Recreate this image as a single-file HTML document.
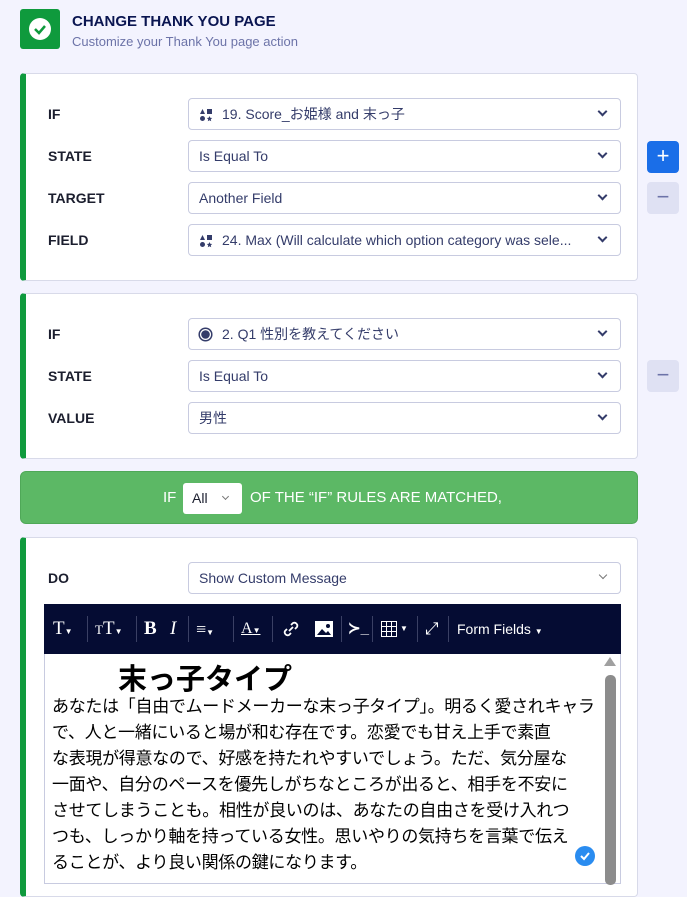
<!DOCTYPE html>
<html><head><meta charset="utf-8"><style>
*{box-sizing:border-box;margin:0;padding:0}
body{width:687px;height:874px;overflow:hidden;background:#f3f3fe;font-family:"Liberation Sans","Noto Sans CJK JP",sans-serif;position:relative;color:#0a1551}
.abs{position:absolute}
.card{position:absolute;left:20px;width:618px;background:#fff;border:1px solid #d8dae9;border-left:6px solid #0f9a3d;border-radius:4px}
.lbl{position:absolute;left:48px;font-size:14px;font-weight:bold;color:#1b1e2e}
.sel{position:absolute;left:188px;width:433px;height:32px;border:1px solid #c8cbe0;border-radius:4px;background:#fff;font-size:14px;color:#343c6a;padding-left:10px;line-height:30px}
.sel .chev{position:absolute;right:14px;top:9px;width:7px;height:7px;border-right:2px solid #343c6a;border-bottom:2px solid #343c6a;transform:rotate(45deg)}
.btn{position:absolute;left:647px;width:32px;height:32px;border-radius:4px;color:#fff;font-size:22px;text-align:center;line-height:30px}
.tb{position:absolute;top:0;color:#fff;font-family:"Liberation Serif",serif;font-size:19px;line-height:50px}
.sep{position:absolute;top:12px;width:1px;height:26px;background:#3a4064}
</style></head><body>
<div class="abs" style="left:20px;top:9px;width:40px;height:40px;background:#0f9a3d;border-radius:3px">
<svg width="40" height="40"><circle cx="20" cy="20" r="11" fill="#fff"/><path d="M15 20l4 4 6-7" stroke="#0f9a3d" stroke-width="2.5" fill="none"/></svg></div>
<div class="abs" style="left:72px;top:13px;font-size:15px;font-weight:bold;color:#0a1551">CHANGE THANK YOU PAGE</div>
<div class="abs" style="left:72px;top:34px;font-size:13px;color:#6c73a8">Customize your Thank You page action</div>

<div class="card" style="top:73px;height:208px"></div>
<div class="lbl" style="top:106px">IF</div>
<div class="sel" style="top:98px;padding-left:33px"><svg class="abs" style="left:10px;top:9px" width="14" height="14"><path d="M1 6L3.5 1 6 6z" fill="#343c6a"/><rect x="8" y="1" width="5" height="5" fill="#343c6a"/><circle cx="3.5" cy="10.5" r="2.5" fill="#343c6a"/><path d="M10.5 8l.8 1.8 1.9.2-1.4 1.3.4 1.9-1.7-1-1.7 1 .4-1.9-1.4-1.3 1.9-.2z" fill="#343c6a"/></svg>19. Score_お姫様 and 末っ子<span class="chev"></span></div>
<div class="lbl" style="top:148px">STATE</div>
<div class="sel" style="top:140px">Is Equal To<span class="chev"></span></div>
<div class="lbl" style="top:190px">TARGET</div>
<div class="sel" style="top:182px">Another Field<span class="chev"></span></div>
<div class="lbl" style="top:232px">FIELD</div>
<div class="sel" style="top:224px;padding-left:33px"><svg class="abs" style="left:10px;top:9px" width="14" height="14"><path d="M1 6L3.5 1 6 6z" fill="#343c6a"/><rect x="8" y="1" width="5" height="5" fill="#343c6a"/><circle cx="3.5" cy="10.5" r="2.5" fill="#343c6a"/><path d="M10.5 8l.8 1.8 1.9.2-1.4 1.3.4 1.9-1.7-1-1.7 1 .4-1.9-1.4-1.3 1.9-.2z" fill="#343c6a"/></svg>24. Max (Will calculate which option category was sele...<span class="chev"></span></div>
<div class="btn" style="top:141px;background:#1a6ee8">+</div>
<div class="btn" style="top:182px;background:#dfe1f3;color:#6c73a8">−</div>

<div class="card" style="top:293px;height:166px"></div>
<div class="lbl" style="top:326px">IF</div>
<div class="sel" style="top:318px;padding-left:33px"><svg class="abs" style="left:9px;top:8px" width="15" height="15"><circle cx="7.5" cy="7.5" r="6.3" fill="none" stroke="#343c6a" stroke-width="1.5"/><circle cx="7.5" cy="7.5" r="4.3" fill="#343c6a"/></svg>2. Q1 性別を教えてください<span class="chev"></span></div>
<div class="lbl" style="top:368px">STATE</div>
<div class="sel" style="top:360px">Is Equal To<span class="chev"></span></div>
<div class="lbl" style="top:410px">VALUE</div>
<div class="sel" style="top:402px">男性<span class="chev"></span></div>
<div class="btn" style="top:360px;background:#dfe1f3;color:#6c73a8">−</div>

<div class="abs" style="left:20px;top:471px;width:618px;height:53px;background:#5cb865;border-radius:6px;border:1px solid #4fa858"></div>
<div class="abs" style="left:163px;top:489px;color:#fff;font-size:15px">IF</div>
<div class="abs" style="left:183px;top:483px;width:59px;height:31px;background:#fff;border-radius:3px;font-size:14px;color:#1b1e2e;padding:7px 0 0 9px">All<span class="abs" style="left:40px;top:11px;width:5px;height:5px;border-right:1.5px solid #777;border-bottom:1.5px solid #777;transform:rotate(45deg)"></span></div>
<div class="abs" style="left:250px;top:489px;color:#fff;font-size:15px">OF THE “IF” RULES ARE MATCHED,</div>

<div class="card" style="top:537px;height:360px"></div>
<div class="lbl" style="top:570px">DO</div>
<div class="sel" style="top:562px">Show Custom Message<span class="chev" style="width:6px;height:6px;border-width:1.5px;border-color:#777"></span></div>

<div class="abs" style="left:44px;top:604px;width:577px;height:280px;border:1px solid #c8cbe0;background:#fff"></div>
<div class="abs" style="left:44px;top:604px;width:577px;height:50px;background:#050c33">
<span class="tb" style="left:9px">T<small style="font-size:8px">▼</small></span>
<div class="sep" style="left:43px"></div>
<span class="tb" style="left:51px"><small style="font-size:13px">T</small>T<small style="font-size:8px">▼</small></span>
<div class="sep" style="left:92px"></div>
<span class="tb" style="left:100px;font-weight:bold">B</span>
<span class="tb" style="left:126px;font-style:italic">I</span>
<div class="sep" style="left:144px"></div>
<span class="tb" style="left:152px;font-size:18px">≡<small style="font-size:8px">▼</small></span>
<div class="sep" style="left:189px"></div>
<span class="tb" style="left:197px;font-size:16px;text-decoration:underline">A<small style="font-size:8px">▼</small></span>
<div class="sep" style="left:228px"></div>
<svg class="abs" style="left:238px;top:16px" width="18" height="18"><path d="M7 11l4-4M5 9l-2 2a3 3 0 004 4l2-2M13 9l2-2a3 3 0 00-4-4l-2 2" stroke="#fff" stroke-width="1.8" fill="none"/></svg>
<svg class="abs" style="left:271px;top:17px" width="18" height="16"><rect width="18" height="16" fill="#fff"/><path d="M2 14l5-6 4 4 2-2 3 4z" fill="#050c33"/><circle cx="13" cy="5" r="2" fill="#050c33"/></svg>
<div class="sep" style="left:297px"></div>
<span class="tb" style="left:304px;font-family:'Liberation Sans';font-size:15px;font-weight:bold">≻_</span>
<div class="sep" style="left:328px"></div>
<svg class="abs" style="left:337px;top:17px" width="16" height="16"><path d="M.5.5h15v15H.5zM5.5 0v16M10.5 0v16M0 5.5h16M0 10.5h16" stroke="#fff" fill="none"/></svg><span class="abs" style="left:356px;top:20px;color:#fff;font-size:8px">▼</span>
<div class="sep" style="left:373px"></div>
<span class="tb" style="left:381px;font-family:'Liberation Sans';font-size:17px">⤢</span>
<div class="sep" style="left:404px"></div>
<span class="tb" style="left:413px;font-family:'Liberation Sans';font-size:14px">Form Fields <small style="font-size:8px">▼</small></span>
</div>
<div class="abs" style="left:604px;top:657px;width:0;height:0;border:6px solid transparent;border-bottom:9px solid #a0a0a0;border-top:0"></div>
<div class="abs" style="left:605px;top:675px;width:11px;height:210px;background:#8c8c8c;border-radius:5px"></div>
<div class="abs" style="left:118px;top:659px;font-size:29px;font-weight:bold;color:#000;font-family:'Noto Sans CJK JP',sans-serif;line-height:36px">末っ子タイプ</div>
<div class="abs" style="left:52px;top:692px;white-space:nowrap;font-size:17px;line-height:26px;color:#000;font-family:'Noto Sans CJK JP',sans-serif;letter-spacing:-0.3px">あなたは「自由でムードメーカーな末っ子タイプ」。明るく愛されキャラ<br>で、人と一緒にいると場が和む存在です。恋愛でも甘え上手で素直<br>な表現が得意なので、好感を持たれやすいでしょう。ただ、気分屋な<br>一面や、自分のペースを優先しがちなところが出ると、相手を不安に<br>させてしまうことも。相性が良いのは、あなたの自由さを受け入れつ<br>つも、しっかり軸を持っている女性。思いやりの気持ちを言葉で伝え<br>ることが、より良い関係の鍵になります。</div>
<svg class="abs" style="left:575px;top:846px" width="20" height="20"><circle cx="10" cy="10" r="10" fill="#2a8cf0"/><path d="M6 10l3 3 5-6" stroke="#fff" stroke-width="2" fill="none"/></svg>
</body></html>
